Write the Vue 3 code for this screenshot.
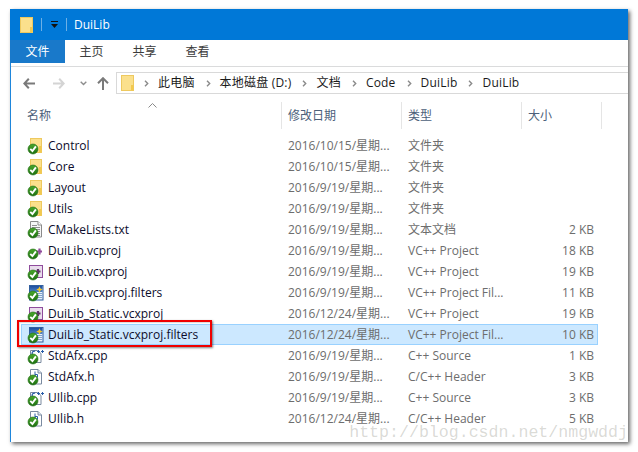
<script setup>
const crumbs = ['此电脑', '本地磁盘 (D:)', '文档', 'Code', 'DuiLib', 'DuiLib']
const files = [
  { name: 'Control', date: '2016/10/15/星期...', type: '文件夹', size: '', icon: 'folder' },
  { name: 'Core', date: '2016/10/15/星期...', type: '文件夹', size: '', icon: 'folder' },
  { name: 'Layout', date: '2016/9/19/星期...', type: '文件夹', size: '', icon: 'folder' },
  { name: 'Utils', date: '2016/9/19/星期...', type: '文件夹', size: '', icon: 'folder' },
  { name: 'CMakeLists.txt', date: '2016/9/19/星期...', type: '文本文档', size: '2 KB', icon: 'text' },
  { name: 'DuiLib.vcproj', date: '2016/9/19/星期...', type: 'VC++ Project', size: '18 KB', icon: 'vc' },
  { name: 'DuiLib.vcxproj', date: '2016/9/19/星期...', type: 'VC++ Project', size: '19 KB', icon: 'vcx' },
  { name: 'DuiLib.vcxproj.filters', date: '2016/9/19/星期...', type: 'VC++ Project Fil...', size: '11 KB', icon: 'filter' },
  { name: 'DuiLib_Static.vcxproj', date: '2016/12/24/星期...', type: 'VC++ Project', size: '19 KB', icon: 'vcx' },
  { name: 'DuiLib_Static.vcxproj.filters', date: '2016/12/24/星期...', type: 'VC++ Project Fil...', size: '10 KB', icon: 'filter', selected: true },
  { name: 'StdAfx.cpp', date: '2016/9/19/星期...', type: 'C++ Source', size: '1 KB', icon: 'cpp' },
  { name: 'StdAfx.h', date: '2016/9/19/星期...', type: 'C/C++ Header', size: '3 KB', icon: 'h' },
  { name: 'UIlib.cpp', date: '2016/9/19/星期...', type: 'C++ Source', size: '3 KB', icon: 'cpp' },
  { name: 'UIlib.h', date: '2016/12/24/星期...', type: 'C/C++ Header', size: '5 KB', icon: 'h' }
]
</script>

<template>
  <div class="page">
    <div class="window">
      <header class="titlebar">
        <svg class="folder-big" width="13" height="16" viewBox="0 0 13 16">
          <rect x="0.5" y="0.5" width="12" height="15" fill="#fbe08c" stroke="#eec95f" />
          <rect x="10" y="10" width="2.5" height="5.5" fill="#f2c94f" />
        </svg>
        <i class="qsep"></i>
        <svg class="qdrop" width="7" height="8" viewBox="0 0 7 8">
          <rect x="0" y="0" width="7" height="1" fill="#111" />
          <path d="M0 3h7L3.5 7z" fill="#111" />
        </svg>
        <i class="qsep"></i>
        <span class="title">DuiLib</span>
      </header>

      <nav class="tabs">
        <span class="tab active">文件</span>
        <span class="tab">主页</span>
        <span class="tab">共享</span>
        <span class="tab">查看</span>
      </nav>

      <div class="addressrow">
        <div class="navbtns">
          <svg width="12" height="11" viewBox="0 0 12 11"><path d="M5.800 .8L1.300 5.500l4.500 4.700M1.500 5.500H12" fill="none" stroke="#7a7a7a" stroke-width="2" /></svg>
          <svg class="fwd" width="12" height="11" viewBox="0 0 12 11"><path d="M6.200 .8l4.500 4.700-4.500 4.700M10.500 5.500H0" fill="none" stroke="#d4d4d4" stroke-width="2" /></svg>
          <svg class="down" width="7" height="5" viewBox="0 0 7 5"><path d="M.7.8l2.800 2.800L6.300.8" fill="none" stroke="#8d8d8d" stroke-width="1.400" /></svg>
          <svg class="up" width="12" height="13" viewBox="0 0 12 13"><path d="M1 6.200L6 1.200l5 5M6 1.500V13" fill="none" stroke="#7a7a7a" stroke-width="2" /></svg>
        </div>
        <div class="address">
          <svg class="addr-folder" width="13" height="16" viewBox="0 0 13 16">
            <rect x="0.500" y="0.500" width="12" height="15" fill="#fbe08c" stroke="#eec95f" />
            <rect x="10" y="10" width="2.500" height="5.500" fill="#f2c94f" />
          </svg>
          <template v-for="(c, i) in crumbs" :key="i">
            <svg class="chev" width="5" height="7" viewBox="0 0 5 7"><path d="M1 .8l2.700 2.700L1 6.200" fill="none" stroke="#8a8a8a" stroke-width="1.400" /></svg>
            <span class="crumb">{{ c }}</span>
          </template>
        </div>
      </div>

      <div class="listhead">
        <div class="hcell h-name">名称<svg class="caret" width="9" height="5" viewBox="0 0 9 5"><path d="M.5 4.500l4-4 4 4" fill="none" stroke="#8a8a8a" /></svg></div>
        <div class="hcell">修改日期</div>
        <div class="hcell">类型</div>
        <div class="hcell">大小</div>
      </div>

      <div class="list">
        <div v-for="f in files" :key="f.name" class="row" :class="{ selected: f.selected }">
          <div class="namecell">
            <svg class="ficon" width="18" height="18" viewBox="0 0 18 18">
              <defs>
                <linearGradient id="badge" x1="0" y1="0" x2="0" y2="1">
                  <stop offset="0" stop-color="#4aa82c" />
                  <stop offset="1" stop-color="#1c6f10" />
                </linearGradient>
                <linearGradient id="blue" x1="0" y1="0" x2="0" y2="1">
                  <stop offset="0" stop-color="#1d4e9e" />
                  <stop offset="1" stop-color="#4f86c8" />
                </linearGradient>
              </defs>
              <template v-if="f.icon === 'folder'">
                <rect x="3.500" y="1.500" width="11" height="14" fill="#fbe08c" stroke="#eec95f" />
                <rect x="12" y="9" width="2.500" height="6.500" fill="#f2c94f" />
              </template>
              <template v-else-if="f.icon === 'text'">
                <path d="M3.500.5h7.500l3.500 3.500v12h-11z" fill="#f6f6f6" stroke="#8a8a8a" />
                <path d="M11 .5V4h3.500" fill="#fff" stroke="#8a8a8a" />
                <path d="M5 4.500h5M5 6.500h8M5 8.500h8M9 10.500h4M9 12.500h4M9 14.500h4" stroke="#8f8f8f" />
              </template>
              <template v-else-if="f.icon === 'vc'">
                <path d="M9 9.500h6M12.500 6.500v6" stroke="#8f4c9c" stroke-width="2.200" />
              </template>
              <template v-else-if="f.icon === 'vcx'">
                <rect x="2.500" y="2.500" width="13" height="12" fill="#e9dcec" stroke="#8f4c9c" />
                <path d="M8.500 8.500h5M11 6v5" stroke="#5e3468" stroke-width="2.200" />
              </template>
              <template v-else-if="f.icon === 'filter'">
                <rect x="2.500" y="1.500" width="13.500" height="14.500" fill="#eaf2fb" stroke="#315f9e" />
                <rect x="3" y="2" width="12.500" height="6" fill="url(#blue)" />
                <path d="M8 9.500h7M8 11.500h7M8 13.500h7" stroke="#7fa3cf" />
                <path d="M12.500 2.300l1 2.200 2.200 1-2.200 1-1 2.200-1-2.200-2.200-1 2.200-1z" fill="#f3c62e" />
              </template>
              <template v-else-if="f.icon === 'cpp'">
                <path d="M3.500 3.500h7l3.500 3v9h-10.500z" fill="#fff" stroke="#7a8aa0" />
                <path d="M8.200 4.200a2.400 2.400 0 1 0 0 4.600" fill="none" stroke="#2b5ea8" stroke-width="1.300" />
                <path d="M10 4.500h3M11.500 3v3M14 4.500h3M15.500 3v3" stroke="#2b5ea8" />
              </template>
              <template v-else>
                <path d="M3.500 1.500h7.500l3.500 3.500v11h-11z" fill="#fff" stroke="#7a8aa0" />
                <path d="M11 1.500V5h3.500" fill="#dfe7f2" stroke="#7a8aa0" />
                <path d="M8 3.500v6M8 6.500h2.500v3" fill="none" stroke="#2b5ea8" />
              </template>
              <circle cx="6" cy="12" r="5" fill="url(#badge)" stroke="#1e6a12" stroke-width=".6" />
              <path d="M3.300 11.900l2.100 2.200L8.900 9.400" fill="none" stroke="#fff" stroke-width="1.900" />
            </svg>
            <span class="fname">{{ f.name }}</span>
          </div>
          <div class="cell">{{ f.date }}</div>
          <div class="cell">{{ f.type }}</div>
          <div class="cell size">{{ f.size }}</div>
        </div>
      </div>

      <div class="redbox"></div>
      <div class="watermark">http://blog.csdn.net/nmgwddj</div>
    </div>
  </div>
</template>

<style>
html, body { margin: 0; background: #fff; }
</style>

<style scoped>
.page {
  width: 638px;
  height: 452px;
  padding: 9px 0 0 10px;
  box-sizing: border-box;
  font-family: "Open Sans", "Noto Sans CJK SC", sans-serif;
  font-size: 12px;
  overflow: hidden;
}
.window {
  position: relative;
  width: 618px;
  height: 433px;
  box-sizing: border-box;
  background: #fff;
  border-left: 1px solid #1e86dc;
  box-shadow: 2px 2px 4px rgba(0, 0, 0, 0.6);
}
.titlebar {
  height: 31px;
  margin-left: -1px;
  background: #0078d7;
  display: flex;
  align-items: center;
  padding-left: 10px;
  color: #fff;
}
.qsep {
  width: 1px;
  height: 13px;
  background: #6db0e6;
  margin-left: 8px;
}
.qdrop { margin-left: 9px; margin-right: 8px; }
.qsep + .qdrop + .qsep { margin-left: 0; }
.title { margin-left: 7px; line-height: 16px; }
.tabs {
  height: 23px;
  display: flex;
  align-items: flex-start;
  color: #3b3b3b;
  padding-bottom: 3px;
  border-bottom: 1px solid #dadbdc;
}
.tab {
  width: 53px;
  height: 23px;
  box-sizing: border-box;
  padding-top: 1px;
  line-height: 22px;
  text-align: center;
}
.tab.active {
  width: 55px;
  margin-left: -1px;
  background: #1979ca;
  color: #fff;
}
.addressrow {
  height: 22px;
  margin-top: 5px;
  display: flex;
}
.navbtns {
  width: 105px;
  display: flex;
  align-items: center;
  padding-left: 12px;
  box-sizing: border-box;
  flex: none;
  padding-top: 1px;
}
.fwd { margin-left: 18px; }
.down { margin-left: 15px; }
.up { margin-left: 10px; }
.address {
  flex: 1;
  display: flex;
  align-items: center;
  gap: 9px;
  border: 1px solid #d9d9d9;
  border-right: none;
  padding-left: 4px;
  color: #1a1a1a;
  line-height: 20px;
}
.addr-folder { margin-right: -1px; }
.chev { flex: none; margin-left: 2px; }
.crumb { white-space: nowrap; letter-spacing: 0.2px; }
.listhead {
  height: 27px;
  margin-top: 8px;
  display: grid;
  grid-template-columns: 271px 120px 120px 80px;
  color: #4c607a;
}
.hcell {
  position: relative;
  border-right: 1px solid #e5e5e5;
  padding-left: 6px;
  line-height: 27px;
}
.h-name { padding-left: 16px; }
.caret { position: absolute; left: 137px; top: 1px; }
.list {
  margin-top: 6px;
  padding-left: 10px;
  padding-right: 30px;
}
.row {
  height: 21px;
  display: grid;
  grid-template-columns: 260px 120px 120px 77px;
  align-items: center;
  box-sizing: border-box;
  color: #6d6d6d;
}
.row.selected {
  background: #cce8ff;
  outline: 1px solid #99d1ff;
  outline-offset: -1px;
}
.namecell {
  display: flex;
  align-items: center;
  color: #0c0c2c;
}
.ficon { margin-left: 6px; margin-right: 3px; flex: none; }
.fname, .cell { white-space: nowrap; line-height: 21px; }
.cell { padding-left: 7px; }
.cell.size { text-align: right; padding-right: 4px; }
.redbox {
  position: absolute;
  left: 6px;
  top: 311px;
  width: 195px;
  height: 27px;
  box-sizing: border-box;
  border: 2px solid #f00000;
  box-shadow: 1px 1px 2px rgba(0, 0, 0, 0.5), inset 1px 1px 1px rgba(0, 0, 0, 0.15);
  pointer-events: none;
}
.watermark {
  position: absolute;
  right: 0;
  bottom: 0;
  font-family: "Liberation Mono", monospace;
  font-size: 16.6px;
  line-height: 18px;
  color: rgba(140, 140, 130, 0.32);
  white-space: nowrap;
}
</style>
